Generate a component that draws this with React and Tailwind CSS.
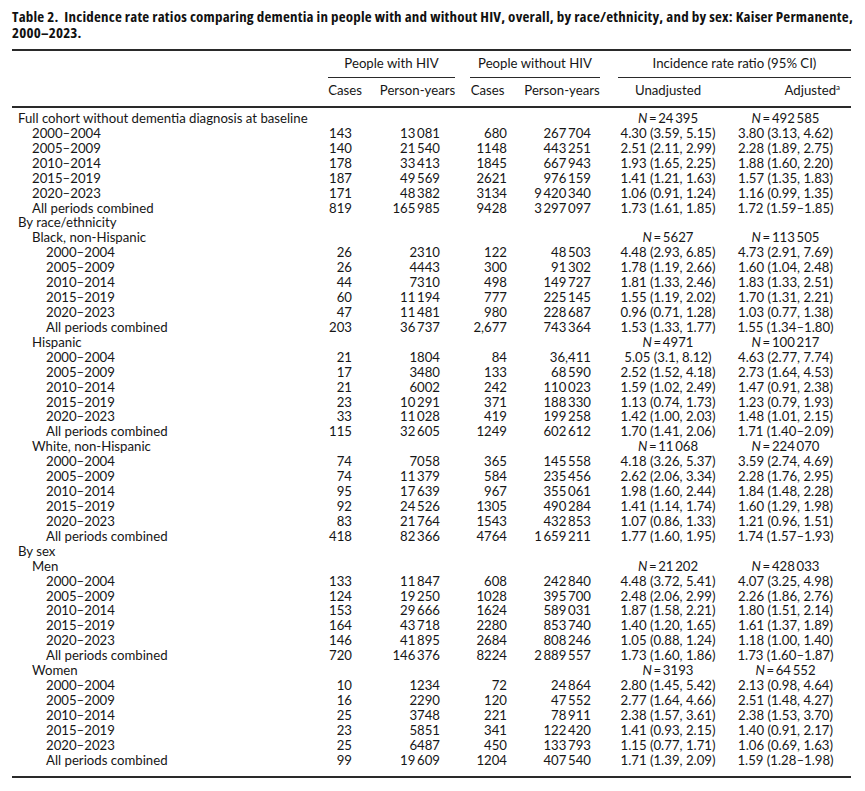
const ts = (s) => s.replace(/_/g, '\u2009');

const rows = [
  { l: 0, t: 'Full cohort without dementia diagnosis at baseline', n1: '24_395', n2: '492_585' },
  { l: 1, t: '2000–2004', v: ['143', '13_081', '680', '267_704', '4.30 (3.59, 5.15)', '3.80 (3.13, 4.62)'] },
  { l: 1, t: '2005–2009', v: ['140', '21_540', '1148', '443_251', '2.51 (2.11, 2.99)', '2.28 (1.89, 2.75)'] },
  { l: 1, t: '2010–2014', v: ['178', '33_413', '1845', '667_943', '1.93 (1.65, 2.25)', '1.88 (1.60, 2.20)'] },
  { l: 1, t: '2015–2019', v: ['187', '49_569', '2621', '976_159', '1.41 (1.21, 1.63)', '1.57 (1.35, 1.83)'] },
  { l: 1, t: '2020–2023', v: ['171', '48_382', '3134', '9_420_340', '1.06 (0.91, 1.24)', '1.16 (0.99, 1.35)'] },
  { l: 1, t: 'All periods combined', v: ['819', '165_985', '9428', '3_297_097', '1.73 (1.61, 1.85)', '1.72 (1.59–1.85)'] },
  { l: 0, t: 'By race/ethnicity' },
  { l: 1, t: 'Black, non-Hispanic', n1: '5627', n2: '113_505' },
  { l: 2, t: '2000–2004', v: ['26', '2310', '122', '48_503', '4.48 (2.93, 6.85)', '4.73 (2.91, 7.69)'] },
  { l: 2, t: '2005–2009', v: ['26', '4443', '300', '91_302', '1.78 (1.19, 2.66)', '1.60 (1.04, 2.48)'] },
  { l: 2, t: '2010–2014', v: ['44', '7310', '498', '149_727', '1.81 (1.33, 2.46)', '1.83 (1.33, 2.51)'] },
  { l: 2, t: '2015–2019', v: ['60', '11_194', '777', '225_145', '1.55 (1.19, 2.02)', '1.70 (1.31, 2.21)'] },
  { l: 2, t: '2020–2023', v: ['47', '11_481', '980', '228_687', '0.96 (0.71, 1.28)', '1.03 (0.77, 1.38)'] },
  { l: 2, t: 'All periods combined', v: ['203', '36_737', '2,677', '743_364', '1.53 (1.33, 1.77)', '1.55 (1.34–1.80)'] },
  { l: 1, t: 'Hispanic', n1: '4971', n2: '100_217' },
  { l: 2, t: '2000–2004', v: ['21', '1804', '84', '36,411', '5.05 (3.1, 8.12)', '4.63 (2.77, 7.74)'] },
  { l: 2, t: '2005–2009', v: ['17', '3480', '133', '68_590', '2.52 (1.52, 4.18)', '2.73 (1.64, 4.53)'] },
  { l: 2, t: '2010–2014', v: ['21', '6002', '242', '110_023', '1.59 (1.02, 2.49)', '1.47 (0.91, 2.38)'] },
  { l: 2, t: '2015–2019', v: ['23', '10_291', '371', '188_330', '1.13 (0.74, 1.73)', '1.23 (0.79, 1.93)'] },
  { l: 2, t: '2020–2023', v: ['33', '11_028', '419', '199_258', '1.42 (1.00, 2.03)', '1.48 (1.01, 2.15)'] },
  { l: 2, t: 'All periods combined', v: ['115', '32_605', '1249', '602_612', '1.70 (1.41, 2.06)', '1.71 (1.40–2.09)'] },
  { l: 1, t: 'White, non-Hispanic', n1: '11_068', n2: '224_070' },
  { l: 2, t: '2000–2004', v: ['74', '7058', '365', '145_558', '4.18 (3.26, 5.37)', '3.59 (2.74, 4.69)'] },
  { l: 2, t: '2005–2009', v: ['74', '11_379', '584', '235_456', '2.62 (2.06, 3.34)', '2.28 (1.76, 2.95)'] },
  { l: 2, t: '2010–2014', v: ['95', '17_639', '967', '355_061', '1.98 (1.60, 2.44)', '1.84 (1.48, 2.28)'] },
  { l: 2, t: '2015–2019', v: ['92', '24_526', '1305', '490_284', '1.41 (1.14, 1.74)', '1.60 (1.29, 1.98)'] },
  { l: 2, t: '2020–2023', v: ['83', '21_764', '1543', '432_853', '1.07 (0.86, 1.33)', '1.21 (0.96, 1.51)'] },
  { l: 2, t: 'All periods combined', v: ['418', '82_366', '4764', '1_659_211', '1.77 (1.60, 1.95)', '1.74 (1.57–1.93)'] },
  { l: 0, t: 'By sex' },
  { l: 1, t: 'Men', n1: '21_202', n2: '428_033' },
  { l: 2, t: '2000–2004', v: ['133', '11_847', '608', '242_840', '4.48 (3.72, 5.41)', '4.07 (3.25, 4.98)'] },
  { l: 2, t: '2005–2009', v: ['124', '19_250', '1028', '395_700', '2.48 (2.06, 2.99)', '2.26 (1.86, 2.76)'] },
  { l: 2, t: '2010–2014', v: ['153', '29_666', '1624', '589_031', '1.87 (1.58, 2.21)', '1.80 (1.51, 2.14)'] },
  { l: 2, t: '2015–2019', v: ['164', '43_718', '2280', '853_740', '1.40 (1.20, 1.65)', '1.61 (1.37, 1.89)'] },
  { l: 2, t: '2020–2023', v: ['146', '41_895', '2684', '808_246', '1.05 (0.88, 1.24)', '1.18 (1.00, 1.40)'] },
  { l: 2, t: 'All periods combined', v: ['720', '146_376', '8224', '2_889_557', '1.73 (1.60, 1.86)', '1.73 (1.60–1.87)'] },
  { l: 1, t: 'Women', n1: '3193', n2: '64_552' },
  { l: 2, t: '2000–2004', v: ['10', '1234', '72', '24_864', '2.80 (1.45, 5.42)', '2.13 (0.98, 4.64)'] },
  { l: 2, t: '2005–2009', v: ['16', '2290', '120', '47_552', '2.77 (1.64, 4.66)', '2.51 (1.48, 4.27)'] },
  { l: 2, t: '2010–2014', v: ['25', '3748', '221', '78_911', '2.38 (1.57, 3.61)', '2.38 (1.53, 3.70)'] },
  { l: 2, t: '2015–2019', v: ['23', '5851', '341', '122_420', '1.41 (0.93, 2.15)', '1.40 (0.91, 2.17)'] },
  { l: 2, t: '2020–2023', v: ['25', '6487', '450', '133_793', '1.15 (0.77, 1.71)', '1.06 (0.69, 1.63)'] },
  { l: 2, t: 'All periods combined', v: ['99', '19_609', '1204', '407_540', '1.71 (1.39, 2.09)', '1.59 (1.28–1.98)'] },
];

const cols = 'grid grid-cols-[310px_46px_99px_41px_108px_104px_131px]';
const indent = ['pl-[6px]', 'pl-[20px]', 'pl-[34px]'];

const N = ({ v }) => (
  <span>
    <i>N</i>{'\u2009=\u2009'}{ts(v)}
  </span>
);

const Row = ({ r }) => (
  <div className={`${cols} h-[14.93px] leading-[15px] whitespace-nowrap`}>
    <div className={indent[r.l]}>{r.t}</div>
    {r.v ? (
      <>
        <div className="text-right pr-[16px]">{ts(r.v[0])}</div>
        <div className="text-right pr-[27px]">{ts(r.v[1])}</div>
        <div className="text-right pr-[1px]">{ts(r.v[2])}</div>
        <div className="text-right pr-[25px]">{ts(r.v[3])}</div>
        <div className="text-center">{r.v[4]}</div>
        <div className="text-center">{r.v[5]}</div>
      </>
    ) : r.n1 ? (
      <>
        <div className="col-start-6 text-center"><N v={r.n1} /></div>
        <div className="text-center"><N v={r.n2} /></div>
      </>
    ) : null}
  </div>
);

export default function App() {
  return (
    <div className="w-[865px] min-h-[791px] bg-white text-[#161616] pl-[12px] pr-[14px] pt-[8px]">
      <h1 className="font-['Open_Sans',sans-serif] font-bold font-stretch-condensed text-[15px] tracking-[0.2px] leading-[16px] text-[#111] whitespace-nowrap">
        <div>Table 2.&nbsp; Incidence rate ratios comparing dementia in people with and without HIV, overall, by race/ethnicity, and by sex: Kaiser Permanente,</div>
        <div>2000–2023.</div>
      </h1>
      <div className="mt-[9px] h-[2px] bg-[#2a2a2a]" />
      <div className="font-['Lato','Open_Sans',sans-serif] text-[13.2px]">
        <div className={`${cols} h-[26px] leading-[16px]`}>
          <div />
          <div className="col-span-2 pt-[4px] pl-[6px] pr-[12px]">
            <div className="text-center">People with HIV</div>
          </div>
          <div className="col-span-2 pt-[4px] pl-[3px] pr-[16px]">
            <div className="text-center">People without HIV</div>
          </div>
          <div className="col-span-2 pt-[4px] pl-[2px]">
            <div className="text-center">Incidence rate ratio (95% CI)</div>
          </div>
        </div>
        <div className={`${cols} h-[1px]`}>
          <div />
          <div className="col-span-2 ml-[6px] mr-[12px] bg-[#2a2a2a]" />
          <div className="col-span-2 ml-[3px] mr-[16px] bg-[#2a2a2a]" />
          <div className="col-span-2 ml-[2px] bg-[#2a2a2a]" />
        </div>
        <div className={`${cols} h-[28px] pt-[4px] leading-[16px]`}>
          <div />
          <div className="text-center">Cases</div>
          <div className="text-center">Person-years</div>
          <div className="text-center">Cases</div>
          <div className="text-center">Person-years</div>
          <div className="text-center">Unadjusted</div>
          <div className="text-right pr-[11px]">
            Adjusted<sup className="text-[8px] -top-[5px]">a</sup>
          </div>
        </div>
        <div className="h-[2px] bg-[#2a2a2a]" />
        <div className="pt-[3px]">
          {rows.map((r, i) => (
            <Row key={i} r={r} />
          ))}
        </div>
        <div className="mt-[8px] h-[2px] bg-[#2a2a2a]" />
      </div>
    </div>
  );
}
